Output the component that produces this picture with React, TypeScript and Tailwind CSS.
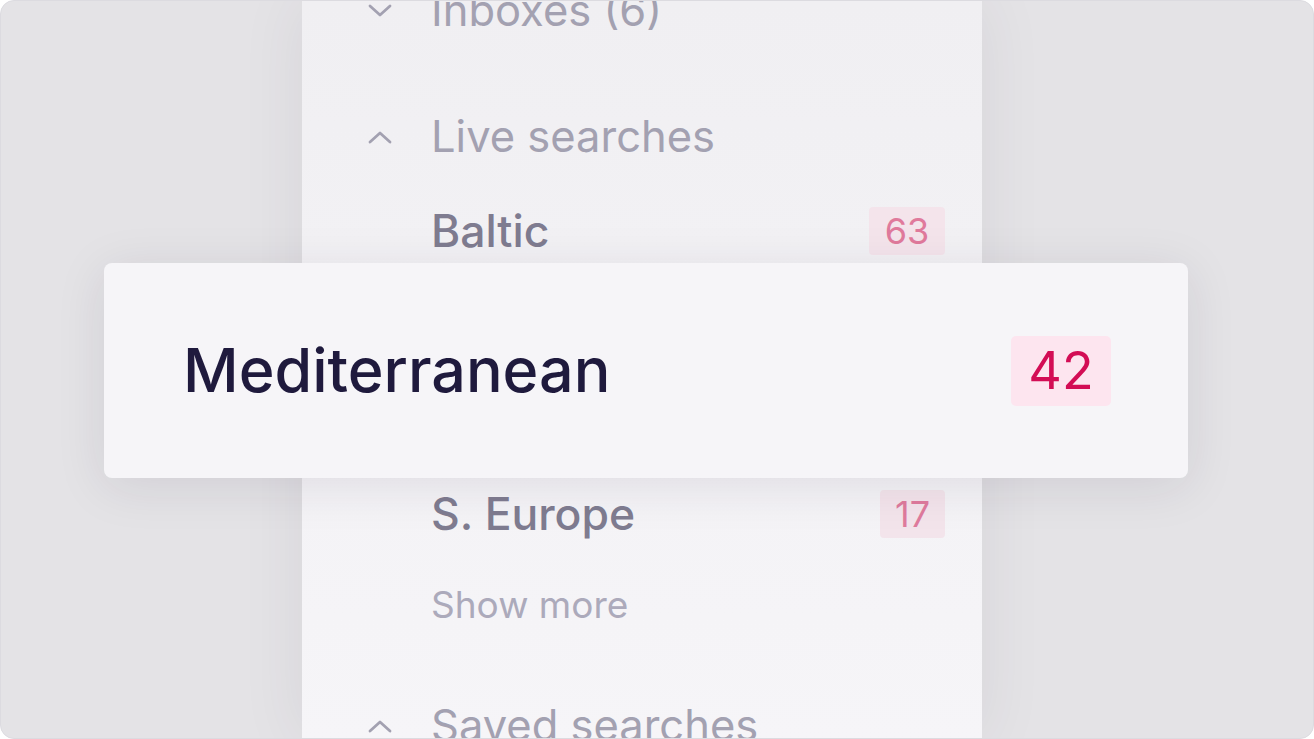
import React from "react";

const font = { fontFamily: "Inter, 'Noto Sans', sans-serif" };

function Chevron({ up }: { up?: boolean }) {
  return (
    <svg width="24" height="14" viewBox="0 0 24 14" className="shrink-0">
      <polyline
        points={up ? "2,12 12,3 22,12" : "2,2 12,11 22,2"}
        fill="none"
        stroke="#a3a1b1"
        strokeWidth="2.8"
        strokeLinecap="round"
        strokeLinejoin="round"
      />
    </svg>
  );
}

export default function App() {
  return (
    <div className="w-[1314px] h-[739px] bg-white" style={font}>
      <div className="w-full h-full rounded-[14px] border border-[#dcdbe0] overflow-hidden bg-[#e4e3e6] flex justify-center">
        <div className="ml-[-30px] w-[680px] h-full bg-gradient-to-b from-[#f0eff2] to-[#f6f5f8] shadow-[0_0_60px_rgba(60,50,80,0.08)] flex flex-col pr-[37px]">
          {/* Inboxes */}
          <div className="shrink-0 -mt-[16px] h-[52px] flex items-center">
            <div className="w-[129px] flex justify-start pl-[66px]">
              <Chevron />
            </div>
            <span className="text-[43.5px] text-[#a3a1b1] leading-none">Inboxes (6)</span>
          </div>
          {/* Live searches */}
          <div className="shrink-0 mt-[74px] h-[52px] flex items-center">
            <div className="w-[129px] flex justify-start pl-[66px]">
              <Chevron up />
            </div>
            <span className="text-[43.5px] text-[#a3a1b1] leading-none">Live searches</span>
          </div>
          {/* Baltic */}
          <div className="shrink-0 mt-[42px] h-[52px] flex items-center pl-[129px]">
            <span className="text-[44.5px] font-medium text-[#7f7c90] leading-none">Baltic</span>
            <span className="ml-auto h-[48px] w-[76px] flex items-center justify-center rounded-[4px] bg-[#f4e4eb] text-[36px] text-[#e07a9c]">
              63
            </span>
          </div>
          {/* Card */}
          <div className="shrink-0 mt-[6px] h-[215px] ml-[-198px] mr-[-243px] rounded-[8px] bg-[#f6f5f8] shadow-[0_8px_50px_rgba(40,30,60,0.10)] flex items-center pl-[79px] pr-[77px] relative z-10">
            <span className="text-[61px] font-medium text-[#1f1a3d] leading-none">Mediterranean</span>
            <span className="ml-auto h-[70px] w-[100px] flex items-center justify-center rounded-[5px] bg-[#fde5ef] text-[52px] text-[#d30d55]">
              42
            </span>
          </div>
          {/* S. Europe */}
          <div className="shrink-0 mt-[10px] h-[52px] flex items-center pl-[129px]">
            <span className="text-[44.5px] font-medium text-[#7f7c90] leading-none">S. Europe</span>
            <span className="ml-auto h-[48px] w-[65px] flex items-center justify-center rounded-[4px] bg-[#f3e4eb] text-[36px] text-[#df7b9d]">
              17
            </span>
          </div>
          {/* Show more */}
          <div className="shrink-0 mt-[38px] h-[52px] flex items-center pl-[129px]">
            <span className="text-[37px] text-[#acaabb] leading-none">Show more</span>
          </div>
          {/* Saved searches */}
          <div className="shrink-0 mt-[70px] h-[52px] flex items-center">
            <div className="w-[129px] flex justify-start pl-[66px]">
              <Chevron up />
            </div>
            <span className="text-[43.5px] text-[#a3a1b1] leading-none">Saved searches</span>
          </div>
        </div>
      </div>
    </div>
  );
}
